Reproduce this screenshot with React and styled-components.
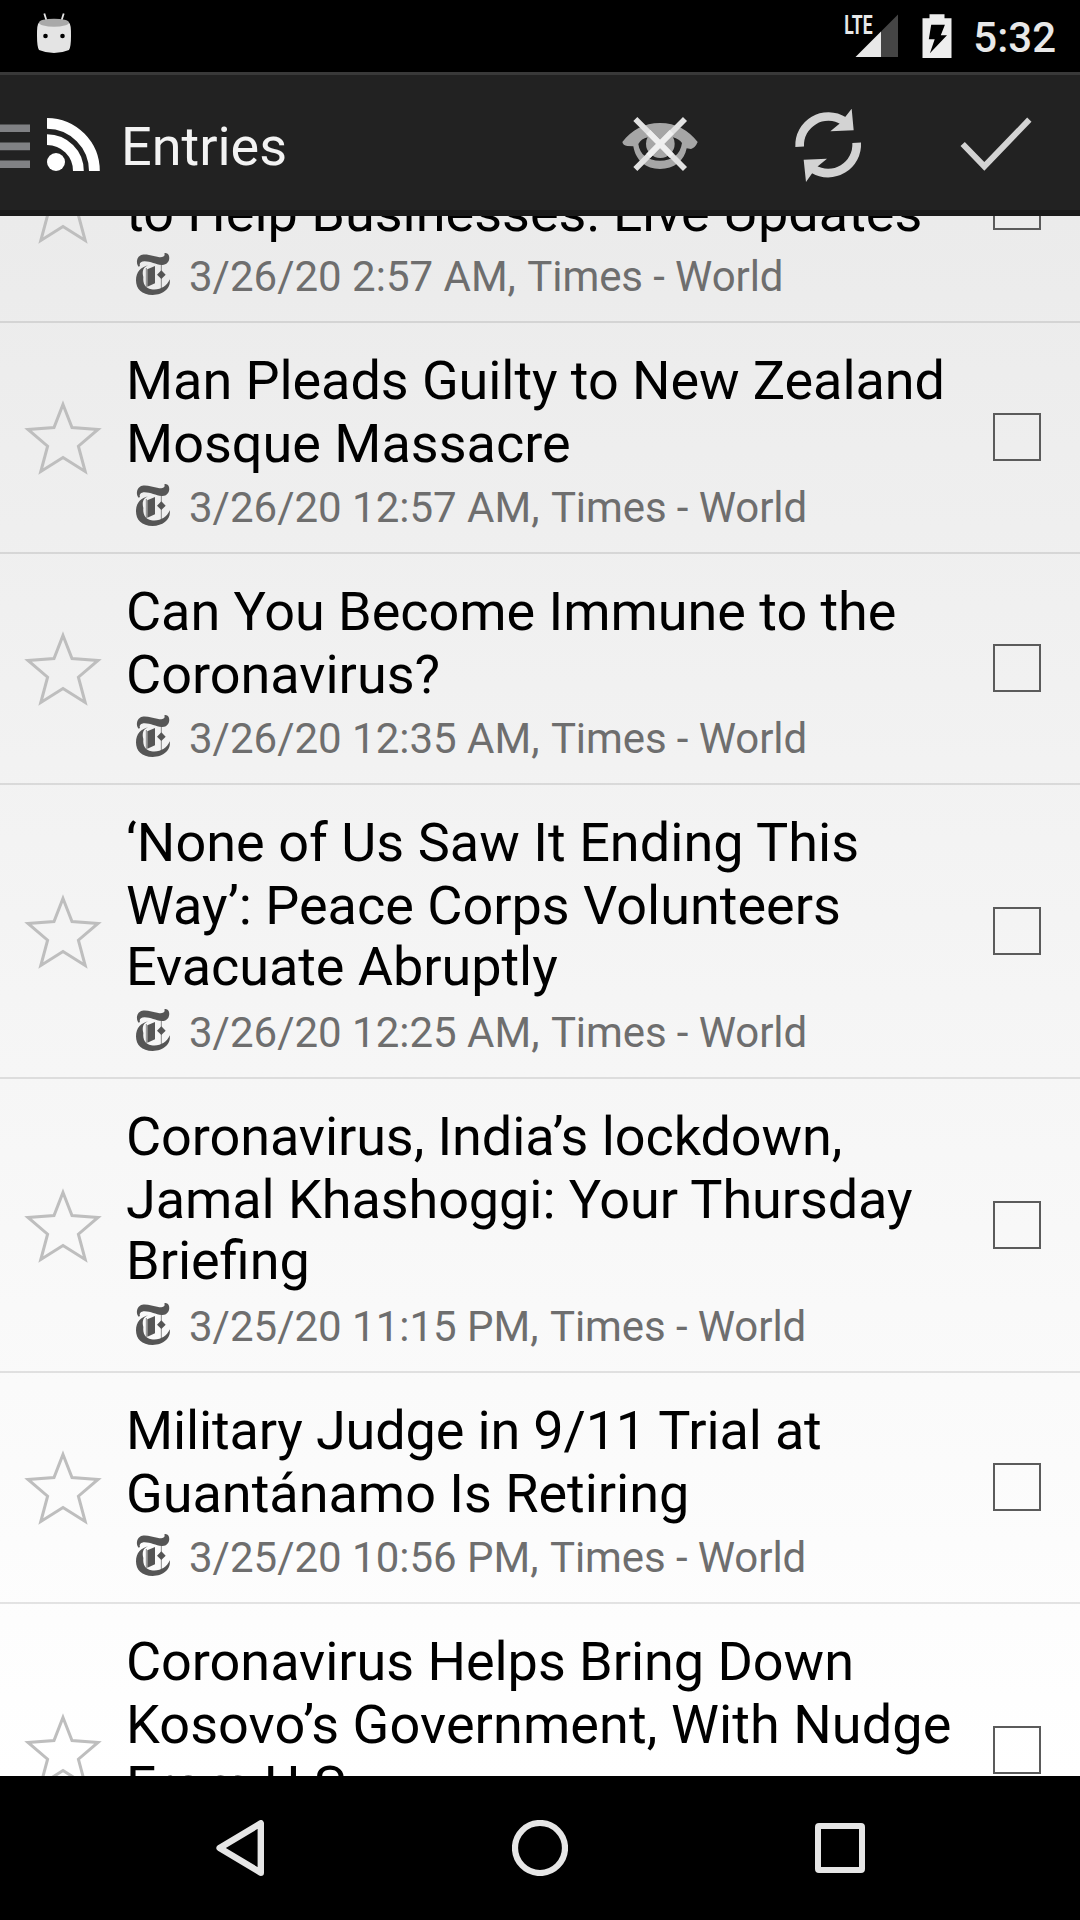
import React from "react";
import styled, { createGlobalStyle } from "styled-components";

const GlobalStyle = createGlobalStyle`
  * { box-sizing: border-box; }
  body { margin: 0; background: #000; }
`;

const Screen = styled.div`
  width: 1080px;
  height: 1920px;
  display: flex;
  flex-direction: column;
  overflow: hidden;
  background: #000;
  font-family: Roboto, "Liberation Sans", sans-serif;
  svg { display: block; flex: none; }
`;

const StatusBar = styled.header`
  height: 72px;
  flex: none;
  display: flex;
  align-items: flex-start;
  justify-content: space-between;
  padding: 12px 24px 0 36px;
`;

const StatusIcons = styled.div`
  display: flex;
  align-items: flex-start;
`;

const SignalIcon = styled.svg`
  margin-right: 23px;
  overflow: visible;
`;

const Clock = styled.time`
  margin-left: 21px;
  padding-top: 1px;
  color: #e8e8e8;
  font-size: 42px;
  font-weight: 500;
  line-height: 49px;
`;

const ActionBar = styled.div`
  height: 144px;
  flex: none;
  display: flex;
  align-items: center;
  background: #222;
  box-shadow: inset 0 3px #393939, inset 0 -6px #1b1b1b;
  color: #f3f3f3;
`;

const DrawerIcon = styled.svg`
  margin-top: 4px;
`;

const ActionTitle = styled.h1`
  flex: 1;
  margin: 6px 0 0 21px;
  font-size: 54px;
  font-weight: 400;
  line-height: 64px;
`;

const ActionButton = styled.button`
  width: 168px;
  height: 144px;
  padding: 0;
  border: 0;
  background: none;
  display: flex;
  align-items: center;
  justify-content: center;
`;

const ListViewport = styled.main`
  height: 1560px;
  flex: none;
  overflow: hidden;
  background: linear-gradient(#ebebeb, #fff);
`;

const EntryList = styled.ul`
  margin: -124px 0 0;
  padding: 0;
  list-style: none;
`;

const EntryRow = styled.li`
  height: ${(p) => (p.$lines === 3 ? 294 : 231)}px;
  border-bottom: 2px solid rgba(0, 0, 0, 0.1);
  display: flex;
`;

const SideCell = styled.div`
  flex: none;
  width: ${(p) => p.$width}px;
  display: flex;
  align-items: center;
  justify-content: center;
  padding-bottom: ${(p) => (p.$lines === 3 ? 0 : 1)}px;
`;

const EntryBody = styled.div`
  flex: 1;
  min-width: 0;
  padding-top: 26px;
`;

const TitleLine = styled.div`
  height: ${(p) => (p.$third ? 65 : 63)}px;
  margin-top: ${(p) => (p.$third ? -2 : 0)}px;
  color: #000;
  font-size: 54px;
  line-height: 63px;
  letter-spacing: ${(p) => p.$tracking || 0}px;
  white-space: nowrap;
`;

const Meta = styled.div`
  display: flex;
  align-items: flex-start;
  margin-top: 8px;
  padding-left: 5px;
  color: #6e6e6e;
  font-size: 42px;
  line-height: 49px;
  white-space: pre;
`;

const FeedLogo = styled.svg`
  width: 44px;
  height: 44px;
  margin-right: 14px;
  color: #555;
`;

const FeedName = styled.span`
  margin-left: 1px;
  letter-spacing: -0.08px;
`;

const CheckBox = styled.span`
  width: 48px;
  height: 48px;
  border: 2px solid #5b5b5b;
`;

const NavBar = styled.nav`
  height: 144px;
  flex: none;
  display: grid;
  grid-template-columns: repeat(3, 300px);
  justify-content: center;
  align-items: center;
  justify-items: center;
`;

const entries = [
  { title: [[""], ["to Help Businesses: Live Updates"]], time: "3/26/20 2:57 AM" },
  { title: [["Man Pleads Guilty to New Zealand", -0.07], ["Mosque Massacre"]], time: "3/26/20 12:57 AM" },
  { title: [["Can You Become Immune to the", -0.04], ["Coronavirus?"]], time: "3/26/20 12:35 AM" },
  {
    title: [["‘None of Us Saw It Ending This", 0.04], ["Way’: Peace Corps Volunteers"], ["Evacuate Abruptly", -0.05]],
    time: "3/26/20 12:25 AM",
  },
  {
    title: [["Coronavirus, India’s lockdown,", -0.08], ["Jamal Khashoggi: Your Thursday", -0.08], ["Briefing"]],
    time: "3/25/20 11:15 PM",
  },
  { title: [["Military Judge in 9/11 Trial at", -0.15], ["Guantánamo Is Retiring", -0.02]], time: "3/25/20 10:56 PM" },
  { title: [["Coronavirus Helps Bring Down", -0.04], ["Kosovo’s Government, With Nudge", 0.09], ["From U.S."]] },
];

const DebugHead = () => (
  <svg width="36" height="42" viewBox="36 12 36 42">
    <path d="M44.3 13.5 46.8 21.5M63.7 13.5 61.2 21.5" stroke="#e4e4e4" strokeWidth="1.8" />
    <path d="M39 22.5Q54 27 69 22.5Q71.2 24 71 36Q71 47 69 50Q62 53 54 53Q46 53 39 50Q37 47 37 36Q36.8 24 39 22.5Z" fill="#e4e4e4" />
    <ellipse cx="54" cy="22.7" rx="15" ry="4" fill="#a9a9a9" />
    <circle cx="45.5" cy="36" r="2.3" />
    <circle cx="62.5" cy="36" r="2.3" />
  </svg>
);

const Signal = () => (
  <SignalIcon width="55" height="46" viewBox="844 12 55 46">
    <text x="844.3" y="33.5" fontSize="25.5" fontWeight="700" fill="#e8e8e8" textLength="28.3" lengthAdjust="spacingAndGlyphs">LTE</text>
    <path d="M881 57V31.5L898 14.5V57Z" fill="#454545" />
    <path d="M855.5 57 881 31.5V57Z" fill="#e8e8e8" />
  </SignalIcon>
);

const Battery = () => (
  <svg width="30" height="46" viewBox="922.5 12 30 46">
    <path d="M923 18.3h7V14.2h15v4.1h7V58h-29Z" fill="#eee" />
    <path d="M931.7 24.7H945.4L941.3 35.3H947.5L930.4 53.3 935.2 39.2H929.3Z" fill="#000" />
  </svg>
);

const DrawerBars = () => (
  <DrawerIcon width="47" height="46" viewBox="0 123 47 46">
    <path d="M0 124.5h30v7.5H0zM0 142.5h30v7.7H0zM0 160.5h30v7.5H0z" fill="#808184" />
  </DrawerIcon>
);

const FeedMark = () => (
  <svg width="53" height="54" viewBox="47 117 53 54">
    <circle cx="56" cy="162" r="9" fill="#fff" />
    <path d="M47 123.3A47.7 47.7 0 0 1 94.4 171M47 139.6A31.4 31.4 0 0 1 78.4 171" fill="none" stroke="#fff" strokeWidth="10.8" />
  </svg>
);

const EyeOff = () => (
  <svg width="78" height="58" viewBox="63 345 234 174">
    <path
      fillRule="evenodd"
      fill="#a6a6a6"
      d="M67 426C95 391 132 369 180 369S265 391 293 426Q286 443 273 447L260 445C253 482 222 507 180 507S107 482 100 439L82 438Q69 436 67 426ZM115 432C119 464 143 482 180 482S241 464 246 429Q237 417 219 412Q224 420 224 431A43 43 0 0 1 138 431Q138 420 143 412Q124 416 115 432Z"
    />
    <path d="M106 357 255 507M255 357 106 507" stroke="#e2e2e2" strokeWidth="17" />
    <path d="M145 396 215 467M215 396 145 467" stroke="#efefef" strokeWidth="17" />
  </svg>
);

const Refresh = () => (
  <svg width="68" height="74" viewBox="582 321 204 222" overflow="visible">
    <path d="M599 440A86 86 0 0 1 731 363M770 428A86 86 0 0 1 640 507" fill="none" stroke="#d3d3d3" strokeWidth="26" />
    <path d="M755 326 761 391 691 394 722 368ZM618 546 611 479 681 476 648 503Z" fill="#d3d3d3" />
  </svg>
);

const Check = () => (
  <svg width="74" height="58" viewBox="1077 345 222 174">
    <path d="M1088 432 1153 499 1288 359" fill="none" stroke="#d3d3d3" strokeWidth="18" />
  </svg>
);

const Star = () => (
  <svg width="80" height="78" viewBox="23 398 80 78">
    <path
      d="M63 404.5 72 427.6 98 429.4 78.4 446.2 85.2 471.5 63 457.6 40.8 471.5 47.6 446.2 28 429.4 54 427.6Z"
      fill="none"
      stroke="#bebebe"
      strokeWidth="3"
      strokeMiterlimit="10"
    />
  </svg>
);

const TimesLogo = () => (
  <FeedLogo viewBox="33 9 132 132" fill="currentColor">
    <path d="M56 53C48 45 49 26 60 20C74 12 96 21 115 24C127 26 137 22 133 14C133 10 143 11 146 18C152 33 143 49 125 48C107 47 92 37 74 37C62 37 57 44 60 51Z" />
    <path d="M86 49C68 54 66 69 70 84C68 103 76 118 94 121C119 125 141 112 149 91C154 117 130 138 98 138C65 138 48 120 48 94C48 69 62 54 86 49Z" />
    <path d="M82 61 105 51V103L82 113Z" />
    <path d="M124 48V64L137 77 124 90V118M124 64 111 77 124 90" />
    <path d="M124 48V119M79 57V114" fill="none" stroke="currentColor" strokeWidth="2" />
  </FeedLogo>
);

function Entry({ entry }) {
  const lines = entry.title.length;
  return (
    <EntryRow $lines={lines}>
      <SideCell $width={126} $lines={lines}><Star /></SideCell>
      <EntryBody>
        {entry.title.map(([line, tracking], i) => (
          <TitleLine key={i} $third={i === 2} $tracking={tracking}>{line}</TitleLine>
        ))}
        {entry.time && (
          <Meta>
            <TimesLogo />
            <span>{entry.time}, </span>
            <FeedName>Times - World</FeedName>
          </Meta>
        )}
      </EntryBody>
      <SideCell $width={126} $lines={lines}><CheckBox /></SideCell>
    </EntryRow>
  );
}

export default function App() {
  return (
    <Screen>
      <GlobalStyle />
      <StatusBar>
        <DebugHead />
        <StatusIcons>
          <Signal />
          <Battery />
          <Clock>5:32</Clock>
        </StatusIcons>
      </StatusBar>
      <ActionBar>
        <DrawerBars />
        <FeedMark />
        <ActionTitle>Entries</ActionTitle>
        <ActionButton aria-label="Hide read"><EyeOff /></ActionButton>
        <ActionButton aria-label="Refresh"><Refresh /></ActionButton>
        <ActionButton aria-label="Mark all read"><Check /></ActionButton>
      </ActionBar>
      <ListViewport>
        <EntryList>
          {entries.map((entry, i) => <Entry key={i} entry={entry} />)}
        </EntryList>
      </ListViewport>
      <NavBar>
        <svg width="48" height="56" viewBox="216 1820 48 56">
          <path d="M219.6 1848 260.8 1823.3V1872.7Z" fill="none" stroke="#e6e6e6" strokeWidth="6.4" strokeLinejoin="round" />
        </svg>
        <svg width="56" height="56" viewBox="0 0 56 56">
          <circle cx="28" cy="28" r="25" fill="none" stroke="#e6e6e6" strokeWidth="6.2" />
        </svg>
        <svg width="50" height="50" viewBox="0 0 50 50">
          <rect x="3" y="3" width="44" height="44" rx="1" fill="none" stroke="#e6e6e6" strokeWidth="6" strokeLinejoin="round" />
        </svg>
      </NavBar>
    </Screen>
  );
}
